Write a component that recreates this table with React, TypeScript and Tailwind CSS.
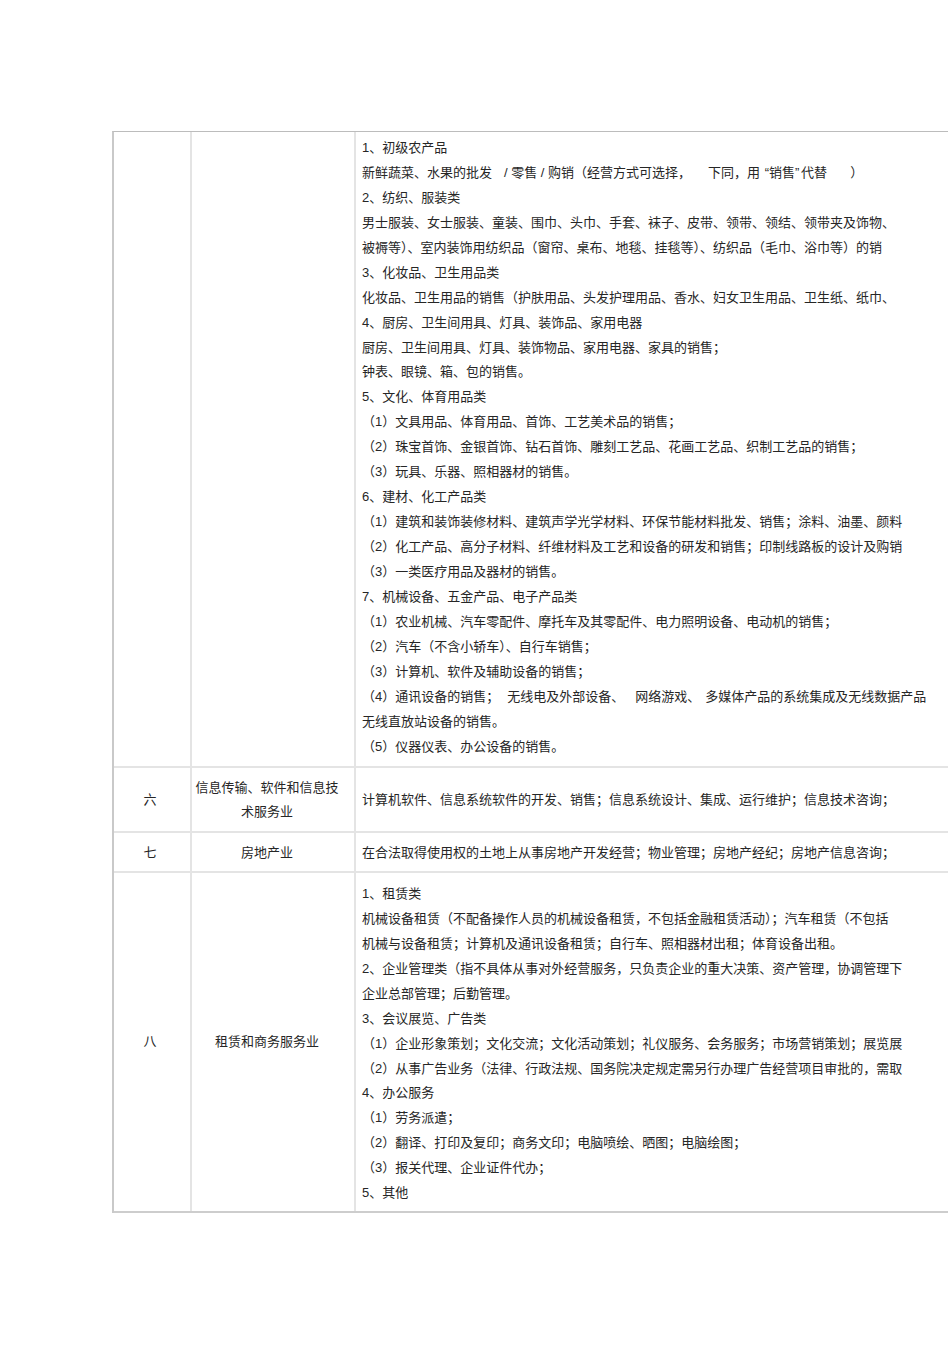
import React from "react";

const font = {
  fontFamily: '"Liberation Sans", "Noto Sans CJK SC", sans-serif',
};

const row1: React.ReactNode[] = [
  "1、初级农产品",
  <>
    新鲜蔬菜、水果的批发
    <span className="ml-[12px]">/ 零售 / 购销（经营方式可选择，</span>
    <span className="ml-[17px]">下同，用</span>
    <span className="inline-block w-[9px] text-right">“</span>销售
    <span className="inline-block w-[6px] text-left">”</span>代替
    <span className="ml-[23px]">）</span>
  </>,
  "2、纺织、服装类",
  "男士服装、女士服装、童装、围巾、头巾、手套、袜子、皮带、领带、领结、领带夹及饰物、",
  "被褥等）、室内装饰用纺织品（窗帘、桌布、地毯、挂毯等）、纺织品（毛巾、浴巾等）的销",
  "3、化妆品、卫生用品类",
  "化妆品、卫生用品的销售（护肤用品、头发护理用品、香水、妇女卫生用品、卫生纸、纸巾、",
  "4、厨房、卫生间用具、灯具、装饰品、家用电器",
  "厨房、卫生间用具、灯具、装饰物品、家用电器、家具的销售；",
  "钟表、眼镜、箱、包的销售。",
  "5、文化、体育用品类",
  "（1）文具用品、体育用品、首饰、工艺美术品的销售；",
  "（2）珠宝首饰、金银首饰、钻石首饰、雕刻工艺品、花画工艺品、织制工艺品的销售；",
  "（3）玩具、乐器、照相器材的销售。",
  "6、建材、化工产品类",
  "（1）建筑和装饰装修材料、建筑声学光学材料、环保节能材料批发、销售；涂料、油墨、颜料",
  "（2）化工产品、高分子材料、纤维材料及工艺和设备的研发和销售；印制线路板的设计及购销",
  "（3）一类医疗用品及器材的销售。",
  "7、机械设备、五金产品、电子产品类",
  "（1）农业机械、汽车零配件、摩托车及其零配件、电力照明设备、电动机的销售；",
  "（2）汽车（不含小轿车）、自行车销售；",
  "（3）计算机、软件及辅助设备的销售；",
  <>
    （4）通讯设备的销售；
    <span className="ml-[8px]">无线电及外部设备、</span>
    <span className="ml-[11px]">网络游戏、</span>
    <span className="ml-[5px]">多媒体产品的系统集成及无线数据产品</span>
  </>,
  "无线直放站设备的销售。",
  "（5）仪器仪表、办公设备的销售。",
];

const row8: string[] = [
  "1、租赁类",
  "机械设备租赁（不配备操作人员的机械设备租赁，不包括金融租赁活动）；汽车租赁（不包括",
  "机械与设备租赁；计算机及通讯设备租赁；自行车、照相器材出租；体育设备出租。",
  "2、企业管理类（指不具体从事对外经营服务，只负责企业的重大决策、资产管理，协调管理下",
  "企业总部管理；后勤管理。",
  "3、会议展览、广告类",
  "（1）企业形象策划；文化交流；文化活动策划；礼仪服务、会务服务；市场营销策划；展览展",
  "（2）从事广告业务（法律、行政法规、国务院决定规定需另行办理广告经营项目审批的，需取",
  "4、办公服务",
  "（1）劳务派遣；",
  "（2）翻译、打印及复印；商务文印；电脑喷绘、晒图；电脑绘图；",
  "（3）报关代理、企业证件代办；",
  "5、其他",
];

function Lines({ items }: { items: React.ReactNode[] }) {
  return (
    <>
      {items.map((t, i) => (
        <div key={i} className="whitespace-nowrap leading-[24.95px] h-[24.95px]">
          {t}
        </div>
      ))}
    </>
  );
}

const cellOne =
  "flex items-center justify-center border-r-2 border-[#e4e4e4] text-center pr-[4px]";
const cellTwo =
  "flex items-center justify-center border-r-2 border-[#e4e4e4] text-center pr-[12px]";

export default function App() {
  return (
    <div
      className="min-h-[1345px] w-[950px] bg-white pt-[131px] pl-[112px] text-[13px] text-[#262626] overflow-hidden"
      style={font}
    >
      <div className="w-[836px] border-t border-l-2 border-t-[#bcbcbc] border-l-[#c9c9c9]">
        {/* Row 1 (continued) */}
        <div className="grid grid-cols-[78px_164px_592px] border-b-2 border-[#e4e4e4]">
          <div className={cellOne}></div>
          <div className={cellTwo}></div>
          <div className="pl-[6px] pt-[4px] pb-[7px] overflow-hidden">
            <Lines items={row1} />
          </div>
        </div>

        {/* Row 六 */}
        <div className="grid grid-cols-[78px_164px_592px] border-b-2 border-[#e4e4e4] h-[65px]">
          <div className={cellOne}>六</div>
          <div className={`${cellTwo} leading-[24px]`}>
            <div>
              信息传输、软件和信息技
              <br />
              术服务业
            </div>
          </div>
          <div className="flex items-center pl-[6px] overflow-hidden whitespace-nowrap">
            计算机软件、信息系统软件的开发、销售；信息系统设计、集成、运行维护；信息技术咨询；
          </div>
        </div>

        {/* Row 七 */}
        <div className="grid grid-cols-[78px_164px_592px] border-b-2 border-[#e4e4e4] h-[40px]">
          <div className={cellOne}>七</div>
          <div className={cellTwo}>房地产业</div>
          <div className="flex items-center pl-[6px] overflow-hidden whitespace-nowrap">
            在合法取得使用权的土地上从事房地产开发经营；物业管理；房地产经纪；房地产信息咨询；
          </div>
        </div>

        {/* Row 八 */}
        <div className="grid grid-cols-[78px_164px_592px] border-b-2 border-[#cdcdcd]">
          <div className={cellOne}>八</div>
          <div className={cellTwo}>租赁和商务服务业</div>
          <div className="pl-[6px] pt-[8.5px] pb-[4.5px] overflow-hidden">
            <Lines items={row8} />
          </div>
        </div>
      </div>
    </div>
  );
}
